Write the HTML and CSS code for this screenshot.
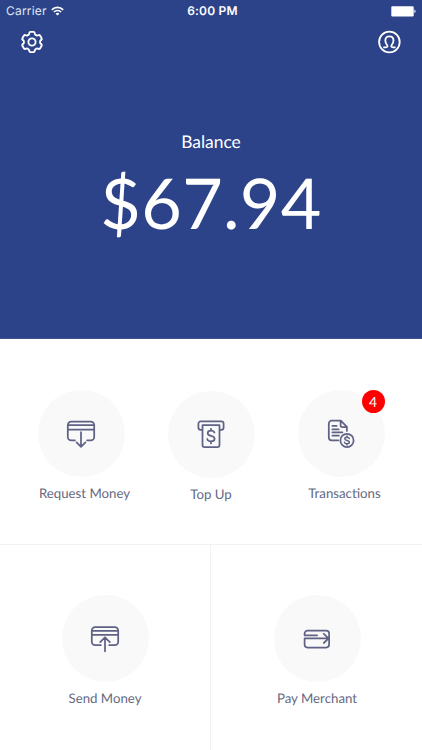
FILE: index.html
```html
<!DOCTYPE html>
<html lang="en">
<head>
<meta charset="utf-8">
<title>Wallet</title>
<link rel="stylesheet" href="styles.css">
</head>
<body>
<main class="app">
  <header class="hero">
    <div class="status">
      <div class="carrier"><span>Carrier</span>
        <svg width="13" height="10" viewBox="0 0 13 10" fill="none" stroke="#fff" stroke-width="1.7"><path d="M.8 3.8a8.1 8.1 0 0 1 11.4 0M2.9 6a5.1 5.1 0 0 1 7.2 0"/><path d="M6.5 9.6 4.6 7.7a2.7 2.7 0 0 1 3.8 0z" fill="#fff" stroke="none"/></svg>
      </div>
      <div class="time">6:00 PM</div>
      <div class="battery"><svg width="25" height="11" viewBox="0 0 25 11" fill="#fff"><rect x=".3" y=".3" width="22.4" height="10.2" rx="1.2"/><path d="M23.4 3.6c1.6.6 1.6 3 0 3.6z"/></svg></div>
    </div>
    <nav class="tools">
      <svg width="24" height="24" viewBox="0 0 24 24" fill="none" stroke="#fff" stroke-width="1.9" stroke-linejoin="round"><circle cx="12" cy="12" r="3.6"/><path d="M10.4 1.9h3.2q.9 0 1.1 1l.2 1q.2.7.8 1l.6.4q.6.3 1.3.1l1-.3q.9-.3 1.4.5l1.6 2.7q.5.8-.2 1.5l-.8.7q-.5.5-.5 1.1v.8q0 .6.5 1.1l.8.7q.7.7.2 1.5L20 18.4q-.5.8-1.4.5l-1-.3q-.7-.2-1.3.1l-.6.4q-.6.3-.8 1l-.2 1q-.2 1-1.1 1h-3.2q-.9 0-1.1-1l-.2-1q-.2-.7-.8-1l-.6-.4q-.6-.3-1.3-.1l-1 .3q-.9.3-1.4-.5l-1.6-2.7q-.5-.8.2-1.5l.8-.7q.5-.5.5-1.1v-.8q0-.6-.5-1.1l-.8-.7q-.7-.7-.2-1.5L4 5.600q.5-.8 1.4-.5l1 .3q.7.2 1.3-.1l.6-.4q.6-.3.8-1l.2-1q.2-1 1.1-1z"/></svg>
      <svg width="24" height="24" viewBox="0 0 24 24" fill="none" stroke="#fff" stroke-width="1.8" stroke-linejoin="round"><circle cx="12.4" cy="12" r="10.3"/><path d="M6.2 17.4h2.2c1.8 0 2.6-1 1.8-2.2-1-1.2-1.9-2.6-1.9-4.6 0-2.7 1.7-4.3 4.1-4.3s4.1 1.6 4.1 4.3c0 2-.9 3.4-1.9 4.600-.8 1.200 0 2.200 1.800 2.200h2.200"/></svg>
    </nav>
    <div class="label">Balance</div>
    <div class="amount">$67.94</div>
  </header>
  <section class="row row-top">
    <div class="action">
      <div class="disc"><svg class="icon" viewBox="0 0 32 32"><path d="M9.9 22.4H6.2a3.4 3.4 0 0 1-3.4-3.4V7a3.4 3.4 0 0 1 3.4-3.4h19.6A3.4 3.4 0 0 1 29.2 7v12a3.4 3.4 0 0 1-3.400 3.400h-3.700M2.800 7.200h26.400M2.800 11.500h26.400M16 14.200v14.600M11.600 24.400l4.400 4.400 4.400-4.400"/></svg></div>
      <div class="name offset">Request Money</div>
    </div>
    <div class="action lowered">
      <div class="disc"><svg class="icon" viewBox="0 0 32 32"><path d="M7.2 10.9H5.700a2.300 2.300 0 0 1-2.300-2.300V4.700a2.300 2.300 0 0 1 2.300-2.300h20.600a2.300 2.300 0 0 1 2.300 2.300v3.900a2.300 2.300 0 0 1-2.300 2.300h-1.500M7.500 6.200h17v19.900a2.100 2.100 0 0 1-2.100 2.100H9.600a2.100 2.100 0 0 1-2.100-2.100z"/><path d="M19.400 13.500c-.4-1.300-1.600-1.900-3.400-1.900-2 0-3.300 1-3.300 2.600 0 3.700 6.900 1.800 6.900 5.500 0 1.700-1.500 2.700-3.600 2.700s-3.500-.9-3.700-2.400M16 9.800v1.800m0 10.800v2"/></svg></div>
      <div class="name">Top Up</div>
    </div>
    <div class="action">
      <div class="disc"><svg class="icon" viewBox="0 0 32 32"><path d="M13.300 22.300H6.600a2.800 2.800 0 0 1-2.800-2.800V5.500a2.800 2.800 0 0 1 2.800-2.800h9.200l6.100 6.200v4M15.600 3v4.400a1.700 1.700 0 0 0 1.700 1.700h4.400M7.400 7.900h4.200M7.400 11.400h6.200M7.400 14.400h10M7.400 17.600h6.500"/><circle cx="22" cy="22.400" r="6.600"/><path class="thin" d="M24.300 20.500c-.3-.9-1.100-1.300-2.300-1.300-1.300 0-2.200.6-2.200 1.600 0 2.300 4.600 1 4.600 3.300 0 1-1 1.700-2.400 1.700s-2.300-.6-2.500-1.500M22 18v1.200m0 6.600V27"/></svg><span class="badge">4</span></div>
      <div class="name offset">Transactions</div>
    </div>
  </section>
  <section class="row row-bottom">
    <div class="cell"><div class="action">
      <div class="disc"><svg class="icon" viewBox="0 0 32 32"><path d="M11.800 22.200H6.200a3.400 3.400 0 0 1-3.400-3.400V7.500a3.400 3.400 0 0 1 3.400-3.400h19.600a3.400 3.400 0 0 1 3.400 3.400v11.300a3.400 3.400 0 0 1-3.400 3.400h-5.600M2.800 7.900h26.400M2.800 11.900h26.400M16 28.300V14.300M11.200 19.100l4.800-4.800 4.800 4.800"/></svg></div>
      <div class="name">Send Money</div>
    </div></div>
    <div class="cell"><div class="action">
      <div class="disc"><svg class="icon" viewBox="0 0 32 32"><path d="M3.600 12.300v-1.700a2.900 2.900 0 0 1 2.900-2.900h18.700a2.900 2.900 0 0 1 2.900 2.900v11a2.900 2.900 0 0 1-2.900 2.900H6.500a2.900 2.900 0 0 1-2.900-2.900v-6.200h23.800M3.600 12.300h12.500M22.800 10.800l4.700 4.600-4.700 4.600"/></svg></div>
      <div class="name">Pay Merchant</div>
    </div></div>
  </section>
</main>
</body>
</html>
```
FILE: styles.css
```css
* { box-sizing: border-box; }
body { margin: 0; background: #fff; font-family: Lato, sans-serif; text-rendering: geometricPrecision; }
.app { width: 422px; height: 750px; overflow: hidden; display: flex; flex-direction: column; }
svg { display: block; }
.hero { height: 339px; background: #2c4389; border-bottom: 1px solid #3d5089; color: #fff; }
.status {
  display: grid; grid-template-columns: 1fr auto 1fr; align-items: center;
  height: 22px; padding: 0 6px; font-family: Inter, sans-serif; font-size: 12px; line-height: 22px;
}
.carrier { display: flex; align-items: center; gap: 4px; letter-spacing: 0.2px; color: #dfe6f8; }
.time { font-weight: 600; letter-spacing: 0.2px; padding-left: 3px; }
.battery { justify-self: end; }
.tools { display: flex; justify-content: space-between; padding: 8px 21px 0 20px; }
.label { margin-top: 77px; text-align: center; font-size: 17.4px; line-height: 22px; }
.amount { margin-top: 7px; text-align: center; font-size: 70px; line-height: 84px; letter-spacing: 0.3px; }
.row { display: grid; }
.row-top { grid-template-columns: repeat(3, 130px); padding: 51px 0 0 16px; height: 206px; border-bottom: 1px solid #f1f1f1; }
.row-bottom { grid-template-columns: 211px 211px; height: 205px; }
.cell { padding-top: 50px; display: flex; justify-content: center; }
.cell:first-child { border-right: 1px solid #f1f1f1; }
.cell:last-child { padding-left: 1px; }
.action { display: flex; flex-direction: column; align-items: center; color: #646880; }
.lowered { padding-top: 1px; }
.disc {
  position: relative; display: flex; align-items: center; justify-content: center;
  width: 87px; height: 87px; border-radius: 50%; background: #f9f9f9;
}
.icon { width: 32px; height: 32px; fill: none; stroke: #5f6285; stroke-width: 1.75; stroke-linecap: round; stroke-linejoin: round; }
.thin { stroke-width: 1.5; }
.badge {
  position: absolute; top: 0; right: 0; width: 23px; height: 23px; border-radius: 50%;
  background: #f00; color: #fff; font-size: 14px; line-height: 23px; text-align: center;
}
.name { margin-top: 7px; font-size: 13.25px; line-height: 18px; white-space: nowrap; }
.offset { padding-left: 7px; }
```
